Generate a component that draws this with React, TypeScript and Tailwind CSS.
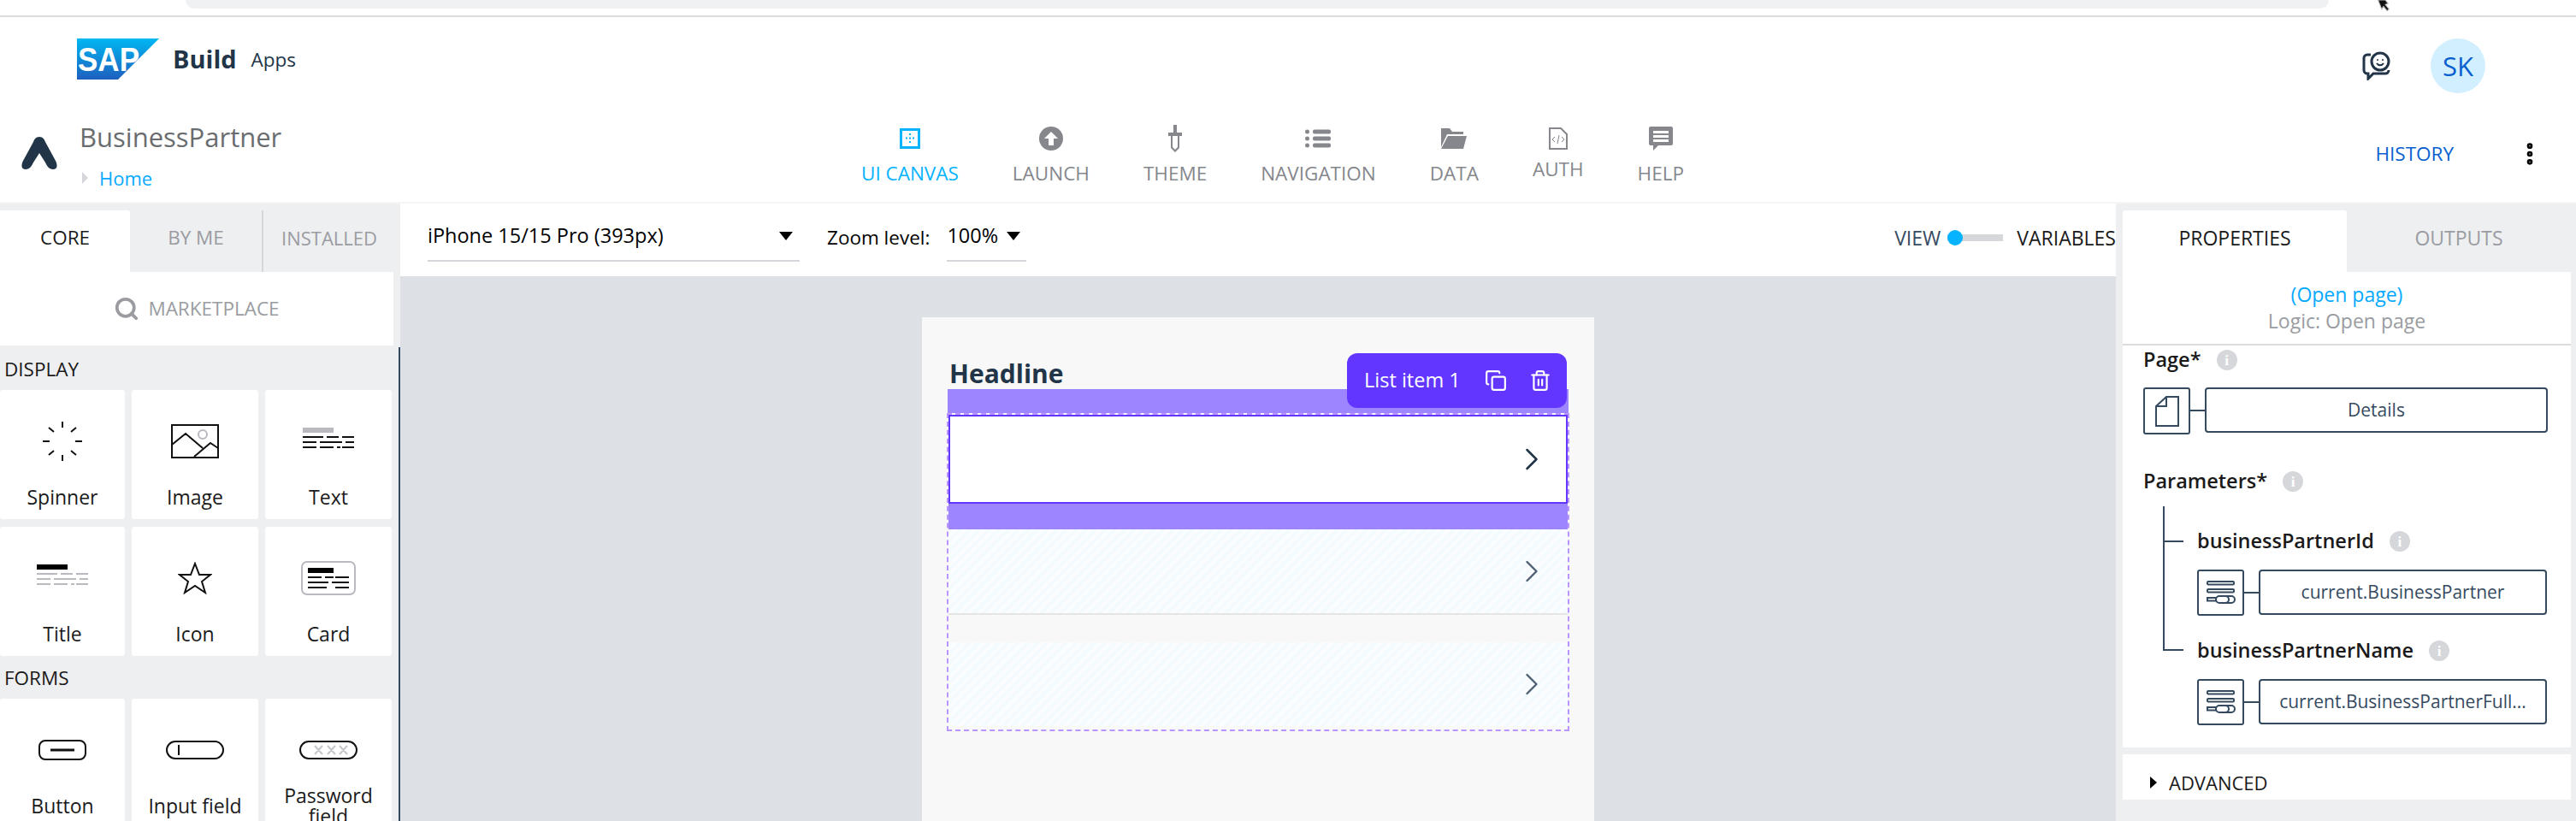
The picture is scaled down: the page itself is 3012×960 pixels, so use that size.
import { MoreVertical, Search, ChevronRight, Copy, Trash2 } from 'lucide-react'

const font = "font-['Open_Sans',sans-serif]"

function SapLogo() {
  return (
    <svg width="96" height="48" viewBox="0 0 96 48">
      <defs>
        <linearGradient id="sap" x1="0" y1="0" x2="0" y2="1">
          <stop offset="0" stopColor="#00b8f1" />
          <stop offset="1" stopColor="#1e5fbf" />
        </linearGradient>
      </defs>
      <polygon points="0,0 96,0 48,48 0,48" fill="url(#sap)" />
      <text x="1" y="38" fill="#fff" fontFamily="Liberation Sans" fontWeight="700" fontSize="38" textLength="72" lengthAdjust="spacingAndGlyphs">
        SAP
      </text>
    </svg>
  )
}

function AppLogo() {
  return (
    <svg width="44" height="38" viewBox="0 0 44 38">
      <path d="M22 0c4 0 6 3 7 6l12 22c2 4 3 10-3 10-5 0-7-4-9-8l-7-11-7 11c-2 4-4 8-9 8-6 0-5-6-3-10L15 6c1-3 3-6 7-6z" fill="#223548" />
    </svg>
  )
}

function NavIcon({ name }: { name: string }) {
  const c = '#85878c'
  if (name === 'UI CANVAS')
    return (
      <svg width="24" height="24" viewBox="0 0 24 24">
        <rect x="1.500" y="1.500" width="21" height="21" fill="none" stroke="#05b3ff" strokeWidth="3" />
        <path d="M12 6v2M12 10.500v2M12 15v2M7 11.500h2M15 11.500h2" stroke="#05b3ff" strokeWidth="2" />
      </svg>
    )
  if (name === 'LAUNCH')
    return (
      <svg width="28" height="28" viewBox="0 0 28 28">
        <circle cx="14" cy="14" r="14" fill={c} />
        <path d="M14 6l8 8h-5v8h-6v-8H6z" fill="#fff" />
      </svg>
    )
  if (name === 'THEME')
    return (
      <svg width="16" height="32" viewBox="0 0 16 32">
        <path d="M6 0h4v9h6v4h-3v14l-5 5-5-5V13H0V9h6z" fill={c} />
        <path d="M5 13h6v13l-3 3-3-3z" fill="#fff" />
      </svg>
    )
  if (name === 'NAVIGATION')
    return (
      <svg width="30" height="22" viewBox="0 0 30 22" fill={c}>
        <circle cx="2.500" cy="3" r="2.500" />
        <circle cx="2.500" cy="11" r="2.500" />
        <circle cx="2.500" cy="19" r="2.500" />
        <rect x="9" y="0.500" width="21" height="5" rx="2" />
        <rect x="9" y="8.500" width="21" height="5" rx="2" />
        <rect x="9" y="16.500" width="21" height="5" rx="2" />
      </svg>
    )
  if (name === 'DATA')
    return (
      <svg width="30" height="24" viewBox="0 0 30 24" fill={c}>
        <path d="M0 0h10l3 4h13v3H7L0 22z" />
        <path d="M8 9h22l-4 15H0z" />
      </svg>
    )
  if (name === 'AUTH')
    return (
      <svg width="22" height="26" viewBox="0 0 22 26" fill="none" stroke={c}>
        <path d="M1 1h13l7 7v17H1z" strokeWidth="2" />
        <path d="M7 11l-3 3 3 3M15 11l3 3-3 3M12 9l-2 10" strokeWidth="1" />
      </svg>
    )
  return (
    <svg width="28" height="28" viewBox="0 0 28 28">
      <path d="M2 0h24a2 2 0 0 1 2 2v18a2 2 0 0 1-2 2H11l-6 6v-6H2a2 2 0 0 1-2-2V2a2 2 0 0 1 2-2z" fill={c} />
      <path d="M5 5h18v3H5zM5 10h18v3H5zM5 15h18v3H5z" fill="#fff" />
    </svg>
  )
}

function Tile({ label, children }: { label: string; children: React.ReactNode }) {
  return (
    <div className="flex h-[151px] flex-col items-center rounded-[3px] bg-white">
      <div className="flex h-[101px] items-center justify-center pt-[18px]">{children}</div>
      <div className="flex h-[48px] items-center text-center text-[23px] leading-[24px] text-[#1a1a1a]">{label}</div>
    </div>
  )
}

function TextLines({ color }: { color: string }) {
  return (
    <g stroke={color} strokeWidth="2">
      <path d="M0 11h24M28 11h14M46 11h14" />
      <path d="M0 17h16M20 17h26M50 17h10" />
      <path d="M0 22h16M20 22h16M40 22h4M46 22h14" transform="translate(0,1)" />
    </g>
  )
}

function SourceIcon() {
  return (
    <div className="flex h-[54px] w-[55px] shrink-0 items-center justify-center rounded-[3px] border-2 border-[#354a5f]">
      <svg width="34" height="28" viewBox="0 0 34 28" fill="none" stroke="#354a5f" strokeWidth="2">
        <rect x="1" y="1" width="31" height="3.500" rx="1" />
        <rect x="1" y="10" width="31" height="3.500" rx="1" />
        <path d="M1 20h10v3.500H1z" />
        <path d="M19 18h-4a4 4 0 0 0 0 8h7a4 4 0 0 0 0-8h-3" />
        <path d="M20 26h9a4 4 0 0 0 0-8h-6" />
      </svg>
    </div>
  )
}

function Info() {
  return (
    <span className="flex h-[24px] w-[24px] items-center justify-center rounded-full bg-[#d5d7da] font-['Liberation_Serif',serif] text-[17px] font-bold leading-none text-white">
      i
    </span>
  )
}

function ValueRow({ value }: { value: string }) {
  return (
    <div className="flex items-start">
      <SourceIcon />
      <div className="mt-[26px] h-[2px] w-[17px] bg-[#354a5f]" />
      <div className="flex h-[53px] w-[337px] items-center justify-center rounded-[4px] border-2 border-[#354a5f] text-[21px] text-[#354a5f]">
        {value}
      </div>
    </div>
  )
}

function Hatch() {
  return (
    <div className="flex h-[98px] items-center justify-end bg-[repeating-linear-gradient(135deg,#f4fbfe_0,#f4fbfe_4px,#fafcfd_4px,#fafcfd_8px)] pr-[20px]">
      <ChevronRight size={44} strokeWidth={1.300} className="text-[#4d5f70]" />
    </div>
  )
}

export default function App() {
  return (
    <div className={`flex h-[960px] w-[3012px] flex-col overflow-hidden bg-white ${font}`}>
      {/* browser strip */}
      <div className="relative h-[20px] shrink-0 border-b-2 border-[#dcdcdc]">
        <div className="mx-[217px] mr-[289px] h-[10px] rounded-b-[16px] bg-[#f0f1f3]" />
        <svg className="absolute left-[2777px] top-0" width="22" height="17" viewBox="0 0 20 16">
          <path d="M3 0l4 10 2-3 4 5 2-2-4-5 3-1-3-4z" fill="#111" stroke="#bbb" />
        </svg>
      </div>

      {/* app header */}
      <div className="flex h-[126px] shrink-0 items-start pl-[90px] pr-[106px] pt-[25px]">
        <SapLogo />
        <span className="ml-[16px] mt-[5px] text-[29px] font-bold leading-[38px] text-[#223548]">Build</span>
        <span className="ml-[17px] mt-[10px] text-[22.500px] leading-[30px] text-[#223548]">Apps</span>
        <div className="ml-auto flex items-center gap-[46px]">
          <svg width="34" height="34" viewBox="0 0 34 34" fill="none" stroke="#223548" strokeWidth="3">
            <path d="M10 4H6a4 4 0 0 0-4 4v14a4 4 0 0 0 4 4h1v6l6-6h14a4 4 0 0 0 4-4" />
            <circle cx="21" cy="12" r="10" />
            <circle cx="18" cy="10" r="1" fill="#223548" stroke="none" />
            <circle cx="24" cy="10" r="1" fill="#223548" stroke="none" />
            <path d="M17 14c2 3 6 3 8 0" strokeWidth="2" />
          </svg>
          <div className="flex h-[64px] w-[64px] items-center justify-center rounded-full bg-[#d1efff] text-[31px] text-[#0a5fd0]">SK</div>
        </div>
      </div>

      {/* project bar */}
      <div className="flex h-[92px] shrink-0 items-start border-b-2 border-[#f5f5f5]">
        <div className="flex w-[1007px] shrink-0 pl-[24px]">
          <div className="pt-[14px]">
            <AppLogo />
          </div>
          <div className="ml-[25px]">
            <div className="-mt-[4px] text-[31px] leading-[36px] text-[#6a6d70]">BusinessPartner</div>
            <div className="mt-[16px] flex items-center gap-[13px] pl-[3px] text-[22px] leading-[28px] text-[#05a9ff]">
              <span className="h-0 w-0 border-y-[7px] border-l-[7px] border-y-transparent border-l-[#d5d7da]" />
              Home
            </div>
          </div>
        </div>
        <div className="flex items-start gap-[63px]">
          {['UI CANVAS', 'LAUNCH', 'THEME', 'NAVIGATION', 'DATA', 'AUTH', 'HELP'].map((n) => (
            <div key={n} className={`flex flex-col items-center ${n === 'UI CANVAS' ? 'text-[#05b3ff]' : 'text-[#85878c]'}`}>
              <div className="flex h-[32px] items-center justify-center"><NavIcon name={n} /></div>
              <div className={`text-[22.500px] leading-[28px] ${n === 'AUTH' ? 'mt-[6px]' : 'mt-[11px]'}`}>{n}</div>
            </div>
          ))}
        </div>
        <div className="ml-auto flex items-center pr-[38px] pt-[18px]">
          <span className="text-[22.500px] leading-[28px] text-[#0a5fd0]">HISTORY</span>
          <MoreVertical size={32} strokeWidth={3} className="ml-[73px] text-black" />
        </div>
      </div>

      <div className="flex min-h-0 flex-1">
        {/* left panel */}
        <aside className="relative w-[468px] shrink-0 overflow-hidden bg-[#eeeff1]">
          <div className="flex h-[80px] pt-[8px] text-[22.500px]">
            <div className="flex w-[152px] items-center justify-center rounded-tr-[3px] bg-white pb-[8px] text-[#1a1a1a]">CORE</div>
            <div className="flex w-[154px] items-center justify-center pb-[8px] text-[#9a9ca1]">BY ME</div>
            <div className="flex w-[162px] items-center justify-center border-l-2 border-[#d5d7da] pb-[8px] pr-[6px] text-[22px] text-[#9a9ca1]">INSTALLED</div>
          </div>
          <div className="flex h-[86px] w-[460px] items-center justify-center gap-[10px] bg-white text-[22.500px] text-[#9a9ca1]">
            <Search size={30} strokeWidth={3} />
            MARKETPLACE
          </div>
          <div className="absolute bottom-0 right-0 top-[168px] w-[2px] bg-[#354a5f]" />
          <div className="flex h-[52px] items-center pl-[5px] pt-[4px] text-[22.500px] text-[#1a1a1a]">DISPLAY</div>
          <div className="grid w-[458px] grid-cols-[146px_148px_148px] gap-x-[8px] gap-y-[9px]">
            <Tile label="Spinner">
              <svg width="46" height="46" viewBox="0 0 46 46" stroke="#111" strokeWidth="2">
                <path d="M23 0v7M23 39v7M0 23h8M38 23h8M7 7l6 5M39 7l-6 5M7 39l6-5M39 39l-6-5" />
              </svg>
            </Tile>
            <Tile label="Image">
              <svg width="56" height="40" viewBox="0 0 56 40" fill="none" stroke="#111" strokeWidth="2">
                <rect x="1" y="1" width="54" height="38" />
                <path d="M1 24l16-13 20 17M27 38l19-16 9 6" />
                <circle cx="37" cy="12" r="5" stroke="#b8bac0" />
              </svg>
            </Tile>
            <Tile label="Text">
              <svg width="60" height="32" viewBox="0 0 60 32">
                <rect width="36" height="6" fill="#b8bac0" />
                <TextLines color="#111" />
              </svg>
            </Tile>
            <Tile label="Title">
              <svg width="60" height="32" viewBox="0 0 60 32">
                <rect width="36" height="6" fill="#000" />
                <TextLines color="#b8bac0" />
              </svg>
            </Tile>
            <Tile label="Icon">
              <svg width="40" height="38" viewBox="0 0 40 38" fill="none" stroke="#111" strokeWidth="2">
                <path d="M20 2l5 13h13l-10 8 4 13-12-8-12 8 4-13L2 15h13z" />
              </svg>
            </Tile>
            <Tile label="Card">
              <svg width="64" height="40" viewBox="0 0 64 40">
                <rect x="1" y="1" width="62" height="38" rx="6" fill="none" stroke="#b8bac0" strokeWidth="2" />
                <g transform="translate(8,8)">
                  <rect width="30" height="6" fill="#000" />
                  <g stroke="#111" strokeWidth="2">
                    <path d="M0 11h16M20 11h10M32 11h16M0 17h24M28 17h20M0 23h22M32 23h16" />
                  </g>
                </g>
              </svg>
            </Tile>
          </div>
          <div className="flex h-[50px] items-center pl-[5px] pt-[2px] text-[22.500px] text-[#1a1a1a]">FORMS</div>
          <div className="grid w-[458px] grid-cols-[146px_148px_148px] gap-x-[8px]">
            <Tile label="Button">
              <svg width="56" height="24" viewBox="0 0 56 24" fill="none" stroke="#111" strokeWidth="2">
                <rect x="1" y="1" width="54" height="22" rx="7" />
                <path d="M14 12h28" strokeWidth="3" />
              </svg>
            </Tile>
            <Tile label="Input field">
              <svg width="68" height="22" viewBox="0 0 68 22" fill="none" stroke="#111" strokeWidth="2">
                <rect x="1" y="1" width="66" height="20" rx="10" />
                <path d="M15 5v12" />
              </svg>
            </Tile>
            <Tile label="Password field">
              <svg width="68" height="22" viewBox="0 0 68 22" fill="none" stroke="#111" strokeWidth="2">
                <rect x="1" y="1" width="66" height="20" rx="10" />
                <path d="M18 6l9 10M27 6l-9 10M33 6l9 10M42 6l-9 10M47 6l9 10M56 6l-9 10" stroke="#c4c6ca" />
              </svg>
            </Tile>
          </div>
        </aside>

        {/* canvas column */}
        <main className="flex min-w-0 flex-1 flex-col">
          <div className="flex h-[85px] shrink-0 items-start pl-[32px] pr-0 text-[22.500px] text-black">
            <div className="flex h-[68px] w-[435px] items-center justify-between border-b-2 border-[#d5d7da] pr-[8px] pt-[10px] text-[23.500px]">
              iPhone 15/15 Pro (393px)
              <span className="h-0 w-0 border-x-[8px] border-t-[10px] border-x-transparent border-t-black" />
            </div>
            <span className="ml-[32px] pt-[23px]">Zoom level:</span>
            <div className="ml-[20px] flex h-[68px] w-[93px] items-center gap-[10px] border-b-2 border-[#d5d7da] pt-[10px] text-[23.500px]">
              100%
              <span className="h-0 w-0 border-x-[8px] border-t-[10px] border-x-transparent border-t-black" />
            </div>
            <div className="ml-auto flex h-[80px] items-center text-[23px]">
              <span className="text-[#354a5f]">VIEW</span>
              <span className="relative ml-[8px] h-[8px] w-[65px] bg-[#d5d7da]">
                <span className="absolute left-0 top-[-5px] h-[18px] w-[18px] rounded-full bg-[#05b3ff]" />
              </span>
              <span className="ml-[16px] text-[#1a1a1a]">VARIABLES</span>
            </div>
          </div>
          <div className="min-h-0 flex-1 bg-[#dde0e4] pl-[610px] pt-[48px]">
            <div className="relative h-[700px] w-[786px] bg-[#f8f8f8] px-[30px]">
              <div className="flex h-[84px] items-end pl-[2px] text-[30px] font-bold leading-[36px] text-[#223548]">Headline</div>
              <div className="absolute right-[32px] top-[42px] z-10 flex h-[64px] w-[257px] items-center rounded-[12px] bg-[#6236ff] pl-[20px] text-[23.500px] text-white">
                List item 1
                <Copy size={26} strokeWidth={2} className="ml-[28px]" />
                <Trash2 size={26} strokeWidth={2} className="ml-[26px]" />
              </div>
              <div className="h-[28px] bg-[#9d85ff]" />
              <div className="-mx-[1px] border-2 border-dashed border-[#bb95ff]">
                <div className="flex h-[104px] items-center justify-end border-2 border-[#6236ff] bg-white pr-[18px]">
                  <ChevronRight size={44} strokeWidth={1.400} className="text-[#223548]" />
                </div>
                <div className="h-[30px] bg-[#9d85ff]" />
                <Hatch />
                <div className="h-[34px] border-t-2 border-[#e5e5e5]" />
                <Hatch />
                <div className="h-[4px]" />
              </div>
            </div>
          </div>
        </main>

        {/* right panel */}
        <aside className="w-[538px] shrink-0 bg-[#eeeff1] pl-[8px]">
          <div className="flex h-[80px] pt-[8px] text-[23px]">
            <div className="flex w-[262px] items-center justify-center rounded-t-[3px] bg-white pb-[8px] text-[#1a1a1a]">PROPERTIES</div>
            <div className="flex w-[262px] items-center justify-center pb-[8px] text-[#9a9ca1]">OUTPUTS</div>
          </div>
          <div className="w-[524px] bg-white">
            <div className="flex h-[86px] flex-col items-center justify-center border-b-2 border-[#dcdcdc] text-[23px] leading-[31px]">
              <span className="text-[#05a9ff]">(Open page)</span>
              <span className="text-[#9a9ca1]">Logic: Open page</span>
            </div>
            <div className="h-[470px] pl-[24px] pr-[25px] text-[23.500px] text-[#1a1a1a]">
              <div className="flex h-[34px] items-center gap-[18px] font-semibold">Page* <Info /></div>
              <div className="mt-[15px] flex items-start">
                <div className="flex h-[55px] w-[55px] shrink-0 items-center justify-center rounded-[3px] border-2 border-[#354a5f]">
                  <svg width="28" height="36" viewBox="0 0 28 36" fill="none" stroke="#354a5f" strokeWidth="2">
                    <path d="M1 12L13 1h14v34H1zM1 12h12V1" />
                  </svg>
                </div>
                <div className="mt-[26px] h-[2px] w-[17px] bg-[#354a5f]" />
                <div className="flex h-[53px] w-[401px] items-center justify-center rounded-[4px] border-2 border-[#354a5f] text-[21px] text-[#354a5f]">Details</div>
              </div>
              <div className="mt-[38px] flex h-[34px] items-center gap-[18px] font-semibold">Parameters* <Info /></div>
              <div className="relative ml-[63px] mt-[12px]">
                {/* tree lines */}
                <div className="absolute bottom-[87px] left-[-40px] top-[0] w-[2px] bg-[#354a5f]" />
                <div className="absolute left-[-40px] top-[40px] h-[2px] w-[24px] bg-[#354a5f]" />
                <div className="absolute bottom-[87px] left-[-40px] h-[2px] w-[24px] bg-[#354a5f]" />
                <div className="flex h-[34px] translate-y-[24px] items-center gap-[18px] font-semibold">businessPartnerId <Info /></div>
                <div className="mt-[40px]"><ValueRow value="current.BusinessPartner" /></div>
                <div className="mt-[24px] flex h-[34px] items-center gap-[18px] font-semibold">businessPartnerName <Info /></div>
                <div className="mt-[16px]"><ValueRow value="current.BusinessPartnerFull..." /></div>
              </div>
            </div>
            <div className="h-[8px] bg-[#eeeff1]" />
            <div className="flex h-[53px] items-center gap-[14px] pl-[32px] pt-[13px] text-[22px] text-[#1a1a1a]">
              <span className="h-0 w-0 border-y-[7px] border-l-[8px] border-y-transparent border-l-black" />
              ADVANCED
            </div>
          </div>
        </aside>
      </div>
    </div>
  )
}
